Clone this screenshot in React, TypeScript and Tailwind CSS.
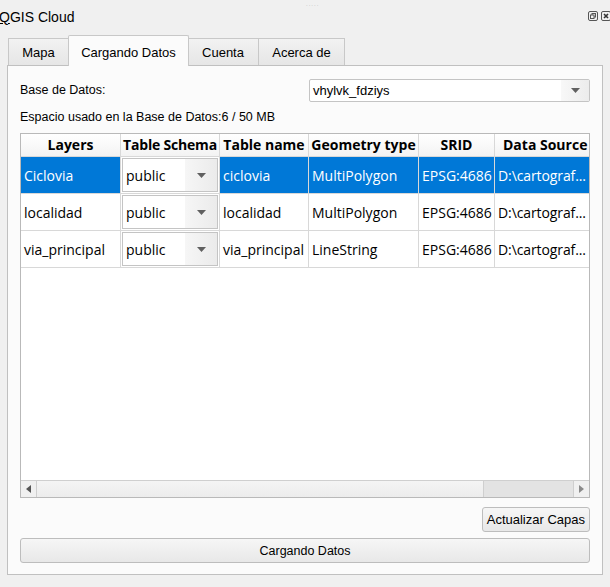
import React from 'react';

const rows = [
    { layer: 'Ciclovia', table: 'ciclovia', geom: 'MultiPolygon', srid: 'EPSG:4686', src: 'D:\\cartograf...' },
    { layer: 'localidad', table: 'localidad', geom: 'MultiPolygon', srid: 'EPSG:4686', src: 'D:\\cartograf...' },
    { layer: 'via_principal', table: 'via_principal', geom: 'LineString', srid: 'EPSG:4686', src: 'D:\\cartograf...' },
];

const cols = 'grid-cols-[100px_99px_89px_110px_76px_1fr]';

const Arrow: React.FC = () => (
    <svg width="9" height="5" viewBox="0 0 9 5">
        <path d="M0 0 H9 L4.5 5 Z" fill="#606060" />
    </svg>
);

const SchemaCombo: React.FC = () => (
    <div className="h-full flex items-stretch border border-[#c4c4c4] bg-white">
        <span className="flex-1 flex items-center pl-[3px]">public</span>
        <span className="w-[32px] flex items-center justify-center bg-gradient-to-r from-[#f6f6f6] to-[#ebebeb]">
            <Arrow />
        </span>
    </div>
);

const App: React.FC = () => {
    return (
        <div className="w-[610px] h-[587px] bg-[#f0f0f0] overflow-hidden relative text-[#000] font-['Liberation_Sans',sans-serif]">
            <div className="absolute left-[306px] top-[1px] text-[6px] leading-none tracking-[1px] text-[#b0b0b0]">.....</div>

            {/* title */}
            <div className="h-[36px] flex items-center justify-between">
                <span className="text-[14px] -ml-[1px] mt-[-2px]">
                    <span className="underline">Q</span>GIS Cloud
                </span>
                <div className="flex gap-[3px] mr-[-1px] mt-[-4px]">
                    <svg width="10" height="10" viewBox="0 0 10 10">
                        <rect x="0.5" y="0.5" width="9" height="9" rx="1.5" fill="none" stroke="#555" />
                        <rect x="4" y="2.5" width="3.5" height="3.5" fill="none" stroke="#555" />
                        <rect x="2.5" y="4" width="3.5" height="3.5" fill="#f0f0f0" stroke="#555" />
                    </svg>
                    <svg width="10" height="10" viewBox="0 0 10 10">
                        <rect x="0.5" y="0.5" width="9" height="9" rx="1.5" fill="none" stroke="#555" />
                        <path d="M3 3 L7 7 M7 3 L3 7" stroke="#333" strokeWidth="1.6" />
                    </svg>
                </div>
            </div>

            {/* tabs */}
            <div className="flex items-end pl-[8px] h-[29px] text-[13px]">
                <div className="w-[61px] h-[27px] flex items-center justify-center pt-[2px] border border-[#c8c8c8] border-b-0 bg-gradient-to-b from-[#f2f2f2] to-[#e6e6e6]">Mapa</div>
                <div className="w-[121px] h-[31px] -mb-[1px] mx-[-1px] z-10 flex items-start pt-[7px] justify-center border border-[#c8c8c8] border-b-0 bg-[#fbfbfb] rounded-t-[2px]">Cargando Datos</div>
                <div className="w-[71px] h-[27px] flex items-center justify-center pt-[2px] border border-[#c8c8c8] border-b-0 border-l-0 bg-gradient-to-b from-[#f2f2f2] to-[#e6e6e6]">Cuenta</div>
                <div className="w-[86px] h-[27px] flex items-center justify-center pt-[2px] border border-[#c8c8c8] border-b-0 border-l-0 bg-gradient-to-b from-[#f2f2f2] to-[#e6e6e6]">Acerca de</div>
            </div>

            {/* panel */}
            <div className="ml-[7px] w-[596px] h-[510px] border border-[#c0c0c0] bg-[#fbfbfb] px-[12px] pt-[13px] flex flex-col text-[12.5px]">
                <div className="h-[23px] flex items-center">
                    <span className="w-[289px]">Base de Datos:</span>
                    <div className="flex-1 h-[23px] flex items-stretch border border-[#c4c4c4] rounded-[2px] bg-white">
                        <span className="flex-1 flex items-center pl-[3px] text-[13px]">vhylvk_fdziys</span>
                        <span className="w-[28px] flex items-center justify-center bg-gradient-to-r from-[#f8f8f8] to-[#ececec]">
                            <Arrow />
                        </span>
                    </div>
                </div>
                <div className="h-[17px] mt-[7px] flex items-center">Espacio usado en la Base de Datos:6 / 50 MB</div>

                {/* table */}
                <div className="mt-[7px] h-[365px] border border-[#b9b9b9] bg-white flex flex-col overflow-hidden font-['Open_Sans',sans-serif] text-[14px]">
                    <div className={`grid ${cols} h-[23px] border-b border-[#d8d8d8] bg-gradient-to-b from-[#ffffff] to-[#f3f3f3] font-bold text-[14px] leading-none`}>
                        {['Layers', 'Table Schema', 'Table name', 'Geometry type', 'SRID', 'Data Source'].map((h, i) => (
                            <div key={h} className={`flex items-center whitespace-nowrap overflow-hidden ${i === 5 ? 'pl-[8px]' : 'justify-center border-r border-[#d8d8d8]'} ${i === 1 ? 'tracking-[-0.2px]' : ''}`}>{h}</div>
                        ))}
                    </div>
                    {rows.map((r, i) => {
                        const sel = i === 0;
                        const cell = `flex items-center pl-[3px] whitespace-nowrap overflow-hidden ${sel ? 'bg-[#0078d7] text-white' : ''}`;
                        return (
                            <div key={r.layer} className={`grid ${cols} h-[37px] border-b border-[#d8d8d8]`}>
                                <div className={`${cell} border-r border-[#d8d8d8]`}>{r.layer}</div>
                                <div className="p-[1px] border-r border-[#d8d8d8] bg-white">
                                    <SchemaCombo />
                                </div>
                                <div className={`${cell} border-r border-[#d8d8d8]`}>{r.table}</div>
                                <div className={`${cell} border-r border-[#d8d8d8]`}>{r.geom}</div>
                                <div className={`${cell} border-r border-[#d8d8d8]`}>{r.srid}</div>
                                <div className={`${cell} tracking-[-0.1px]`}>{r.src}</div>
                            </div>
                        );
                    })}
                    <div className="flex-1" />
                    {/* horizontal scrollbar */}
                    <div className="h-[17px] flex border-t border-[#cfcfcf] bg-[#e3e3e3]">
                        <div className="w-[16px] flex items-center justify-center bg-[#f0f0f0] border-r border-[#cfcfcf]">
                            <svg width="5" height="8" viewBox="0 0 5 8"><path d="M5 0 V8 L0 4 Z" fill="#555" /></svg>
                        </div>
                        <div className="w-[447px] bg-gradient-to-b from-[#f4f4f4] to-[#ececec] border-r border-[#cfcfcf]" />
                        <div className="flex-1" />
                        <div className="w-[16px] flex items-center justify-center bg-[#f0f0f0] border-l border-[#cfcfcf]">
                            <svg width="5" height="8" viewBox="0 0 5 8"><path d="M0 0 V8 L5 4 Z" fill="#8a8a8a" /></svg>
                        </div>
                    </div>
                </div>

                <div className="mt-[9px] flex justify-end">
                    <button className="h-[25px] px-[4px] border border-[#bdbdbd] rounded-[3px] bg-gradient-to-b from-[#f6f6f6] to-[#e8e8e8] text-[13px]">Actualizar Capas</button>
                </div>
                <button className="mt-[6px] h-[25px] w-full border border-[#bdbdbd] rounded-[3px] bg-gradient-to-b from-[#f6f6f6] to-[#e8e8e8] text-[12.5px] pt-[1px]">Cargando Datos</button>
            </div>
        </div>
    );
};

export default App;
